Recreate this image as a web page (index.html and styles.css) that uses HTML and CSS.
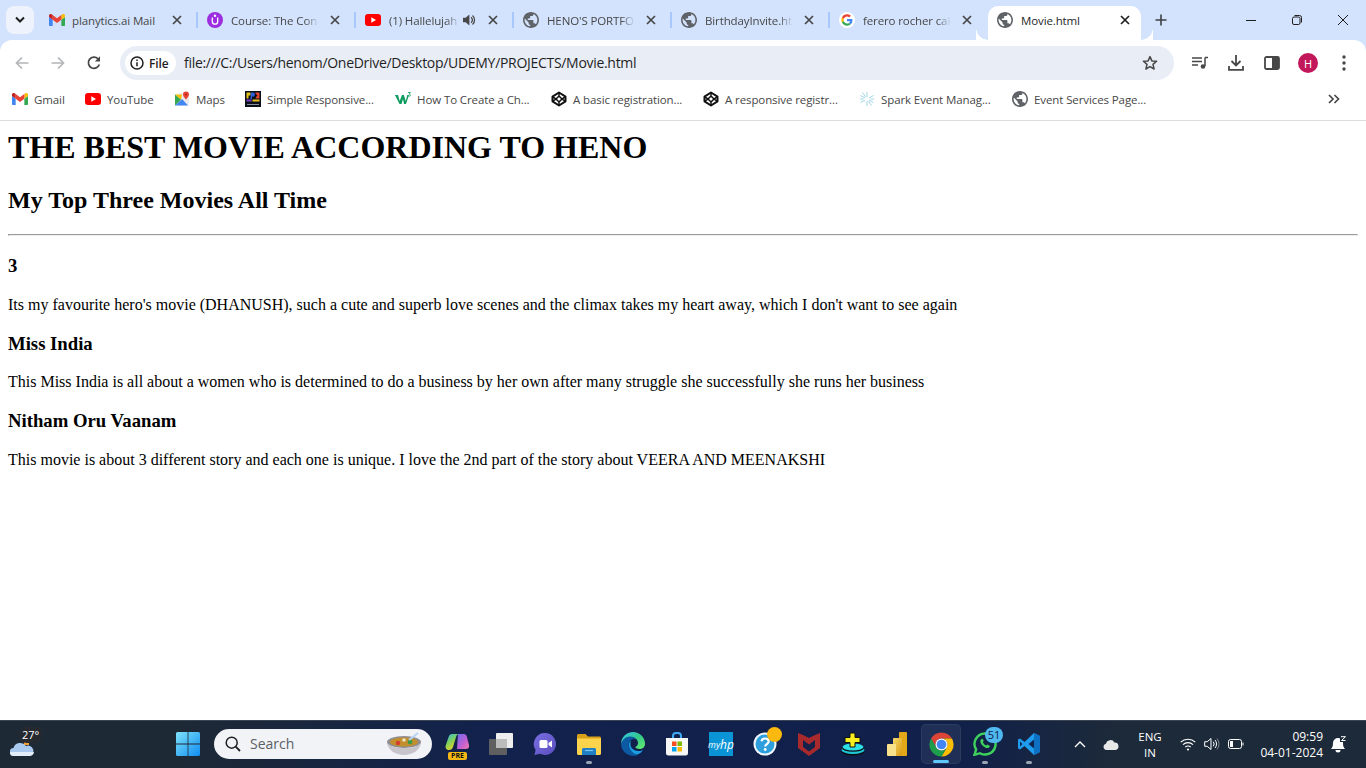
FILE: index.html
```html
<!DOCTYPE html>
<html lang="en">
<head>
<meta charset="utf-8">
<title>Movie.html</title>
<link rel="stylesheet" href="styles.css">
</head>
<body>
<svg class="defs" aria-hidden="true">
  <symbol id="gmail" viewBox="0 0 24 18">
    <path fill="#4285F4" d="M1.6 18h3.9V8.7L0 4.6v11.8C0 17.3.7 18 1.6 18z"/>
    <path fill="#34A853" d="M18.5 18h3.9c.9 0 1.6-.7 1.6-1.6V4.6l-5.5 4.1z"/>
    <path fill="#FBBC04" d="M18.5 1.6v7.1L24 4.6V2.4c0-2-2.3-3.1-3.9-1.9z"/>
    <path fill="#EA4335" d="M5.5 8.7V1.6L12 6.5l6.5-4.9v7.1L12 13.6z"/>
    <path fill="#C5221F" d="M0 2.4v2.2l5.5 4.1V1.6L3.9.5C2.3-.7 0 .4 0 2.4z"/>
  </symbol>
  <symbol id="yt" viewBox="0 0 16 12">
    <rect width="16" height="12" rx="3" fill="#f00"/>
    <path d="M6.3 3.3v5.4L11 6z" fill="#fff"/>
  </symbol>
  <symbol id="globe" viewBox="2 2 20 20">
    <path fill="#5f6368" d="M12 2C6.48 2 2 6.48 2 12s4.48 10 10 10 10-4.48 10-10S17.52 2 12 2zm-1 17.93c-3.95-.49-7-3.85-7-7.93 0-.62.08-1.21.21-1.79L9 15v1c0 1.100.9 2 2 2v1.930zm6.900-2.540c-.26-.81-1-1.390-1.900-1.390h-1v-3c0-.55-.45-1-1-1H8v-2h2c.55 0 1-.45 1-1V7h2c1.100 0 2-.9 2-2v-.41c2.930 1.190 5 4.060 5 7.410 0 2.080-.8 3.970-2.100 5.390z"/>
  </symbol>
  <symbol id="codepen" viewBox="0 0 16 16">
    <path fill="none" stroke="#111" stroke-width="2" stroke-linejoin="round" d="M8 1.500l6.500 4.200v4.600L8 14.500l-6.500-4.200V5.700z"/>
    <path fill="none" stroke="#111" stroke-width="1.500" d="M8 1.500v3.500M8 11v3.500M1.500 5.700L5 8l-3.500 2.300M14.500 5.700L11 8l3.500 2.300M5 8l3-3 3 3-3 3z"/>
  </symbol>
  <symbol id="close" viewBox="0 0 10 10">
    <path d="M1 1l8 8M9 1L1 9" fill="none" stroke="currentColor" stroke-width="1.700"/>
  </symbol>
  <symbol id="chrome" viewBox="0 0 48 48">
    <path fill="#DB4437" d="M6.680 14A20 20 0 0 1 41.320 14H24A10 10 0 0 0 15.340 29z"/>
    <path fill="#FBBC04" d="M41.320 14A20 20 0 0 1 24 44L32.660 29A10 10 0 0 0 24 14z"/>
    <path fill="#1E9E4A" d="M24 44A20 20 0 0 1 6.680 14L15.340 29A10 10 0 0 0 32.660 29z"/>
    <circle cx="24" cy="24" r="10" fill="#fff"/>
    <circle cx="24" cy="24" r="8" fill="#4285F4"/>
  </symbol>
</svg>

<div class="screen">
  <header class="browser">
    <div class="tabstrip">
      <button class="tab-search" aria-label="Search tabs">
        <svg width="12" height="8" viewBox="0 0 12 8"><path d="M2 1.500l4 4 4-4" fill="none" stroke="#1f1f1f" stroke-width="2"/></svg>
      </button>
      <div class="tab">
        <svg class="fav fav-gmail"><use href="#gmail"/></svg>
        <span class="tab-title tab-title-first">planytics.ai Mail</span>
        <svg class="tab-close"><use href="#close"/></svg>
      </div>
      <div class="tab">
        <svg class="fav" viewBox="0 0 16 16"><circle cx="8" cy="8" r="8" fill="#9d2ee0"/><circle cx="8" cy="3.800" r="1.200" fill="#fff"/><path d="M5.300 5.600v3.900a2.700 2.700 0 0 0 5.400 0V5.600" fill="none" stroke="#fff" stroke-width="1.300"/></svg>
        <span class="tab-title">Course: The Con</span>
        <svg class="tab-close"><use href="#close"/></svg>
      </div>
      <div class="tab">
        <svg class="fav"><use href="#yt"/></svg>
        <span class="tab-title tab-title-short">(1) Hallelujah</span>
        <svg class="tab-audio" viewBox="0 0 14 14"><path d="M1 4.800v4.400h2.600L7.400 12.500V1.500L3.600 4.800z" fill="#474747"/><path d="M9 4.200a3.500 3.500 0 0 1 0 5.600M10.500 2.500a6 6 0 0 1 0 9" fill="none" stroke="#474747" stroke-width="1.300"/></svg>
        <svg class="tab-close tab-close-audio"><use href="#close"/></svg>
      </div>
      <div class="tab">
        <svg class="fav"><use href="#globe"/></svg>
        <span class="tab-title">HENO'S PORTFO</span>
        <svg class="tab-close"><use href="#close"/></svg>
      </div>
      <div class="tab">
        <svg class="fav"><use href="#globe"/></svg>
        <span class="tab-title">BirthdayInvite.ht</span>
        <svg class="tab-close"><use href="#close"/></svg>
      </div>
      <div class="tab tab-last">
        <svg class="fav fav-g" viewBox="0 0 48 48"><circle cx="24" cy="24" r="24" fill="#fff"/><g transform="translate(7 7) scale(.71)"><path fill="#EA4335" d="M24 9.500c3.540 0 6.710 1.220 9.210 3.600l6.850-6.850C35.900 2.380 30.470 0 24 0 14.620 0 6.510 5.380 2.560 13.220l7.980 6.190C12.430 13.720 17.740 9.500 24 9.500z"/><path fill="#4285F4" d="M46.980 24.550c0-1.570-.15-3.090-.38-4.550H24v9.020h12.940c-.58 2.960-2.260 5.480-4.780 7.180l7.730 6c4.510-4.180 7.090-10.360 7.090-17.650z"/><path fill="#FBBC05" d="M10.530 28.590c-.48-1.450-.76-2.990-.76-4.590s.27-3.140.76-4.590l-7.980-6.190C.92 16.460 0 20.120 0 24c0 3.880.92 7.540 2.560 10.780l7.970-6.190z"/><path fill="#34A853" d="M24 48c6.480 0 11.930-2.130 15.890-5.810l-7.730-6c-2.150 1.450-4.920 2.300-8.160 2.300-6.260 0-11.570-4.220-13.470-9.910l-7.980 6.190C6.510 42.620 14.620 48 24 48z"/></g></svg>
        <span class="tab-title">ferero rocher cak</span>
        <svg class="tab-close"><use href="#close"/></svg>
      </div>
      <div class="tab tab-active">
        <svg class="fav"><use href="#globe"/></svg>
        <span class="tab-title">Movie.html</span>
        <svg class="tab-close"><use href="#close"/></svg>
      </div>
      <button class="new-tab" aria-label="New tab">
        <svg width="12" height="12" viewBox="0 0 12 12"><path d="M6 .5v11M.5 6h11" fill="none" stroke="#3c4043" stroke-width="1.600"/></svg>
      </button>
      <div class="window-controls">
        <span class="win-btn"><svg width="10" height="10" viewBox="0 0 10 10"><path d="M0 5.500h10" stroke="#1f1f1f" stroke-width="1"/></svg></span>
        <span class="win-btn"><svg width="10" height="10" viewBox="0 0 10 10"><rect x=".5" y="2" width="7.500" height="7.500" rx="1.500" fill="none" stroke="#1f1f1f"/><path d="M2.500.5h5a2 2 0 0 1 2 2v5" fill="none" stroke="#1f1f1f"/></svg></span>
        <span class="win-btn"><svg width="10" height="10" viewBox="0 0 10 10"><path d="M0 0l10 10M10 0L0 10" stroke="#1f1f1f" stroke-width="1"/></svg></span>
      </div>
    </div>

    <div class="toolbar">
      <span class="tool"><svg width="16" height="16" viewBox="0 0 16 16"><path d="M14.500 8H2.500M8 2.500L2.500 8 8 13.500" fill="none" stroke="#b3b5b8" stroke-width="1.700"/></svg></span>
      <span class="tool"><svg width="16" height="16" viewBox="0 0 16 16"><path d="M1.500 8h12M8 2.500L13.500 8 8 13.500" fill="none" stroke="#b3b5b8" stroke-width="1.700"/></svg></span>
      <span class="tool"><svg width="16" height="16" viewBox="0 0 16 16"><path d="M13.300 9.500A5.600 5.600 0 1 1 12 3.800" fill="none" stroke="#474747" stroke-width="1.700"/><path d="M14 1.300v5.200H8.800z" fill="#474747"/></svg></span>
      <div class="omnibox">
        <span class="chip">
          <svg width="14" height="14" viewBox="0 0 14 14"><circle cx="7" cy="7" r="6" fill="none" stroke="#1f1f1f" stroke-width="1.500"/><path d="M7 6.200v4M7 3.500v1.500" stroke="#1f1f1f" stroke-width="1.500"/></svg>
          <span class="chip-label">File</span>
        </span>
        <span class="url">file:///C:/Users/henom/OneDrive/Desktop/UDEMY/PROJECTS/Movie.html</span>
        <svg class="star" width="16" height="16" viewBox="0 0 16 16"><path d="M8 1.600l1.900 4.300 4.700.4-3.600 3.100 1.100 4.600L8 11.600 3.900 14 5 9.400 1.400 6.300l4.700-.4z" fill="none" stroke="#474747" stroke-width="1.500" stroke-linejoin="round"/></svg>
      </div>
      <div class="tool-group">
        <span class="tool"><svg width="16" height="14" viewBox="0 0 16 14"><path d="M0 2h10M0 5.500h10M0 9h6" stroke="#474747" stroke-width="1.500"/><path d="M13 1.500h3M13 1.500v8.500" stroke="#474747" stroke-width="1.500" fill="none"/><circle cx="11" cy="10.500" r="2.300" fill="#474747"/></svg></span>
        <span class="tool"><svg width="16" height="16" viewBox="0 0 16 16"><path d="M8 0v10M3.500 6L8 10.500 12.500 6M1 11v3.800h14V11" fill="none" stroke="#474747" stroke-width="1.800"/></svg></span>
        <span class="tool"><svg width="16" height="14" viewBox="0 0 16 14"><rect x="1" y="1" width="14" height="12" rx="1.500" fill="none" stroke="#474747" stroke-width="1.800"/><rect x="8" y="1" width="7" height="12" fill="#474747"/></svg></span>
        <span class="tool"><span class="avatar">H</span></span>
        <span class="tool"><svg width="4" height="16" viewBox="0 0 4 16"><circle cx="2" cy="2" r="1.700" fill="#474747"/><circle cx="2" cy="8" r="1.700" fill="#474747"/><circle cx="2" cy="14" r="1.700" fill="#474747"/></svg></span>
      </div>
    </div>

    <nav class="bookmarks">
      <span class="bm"><svg class="bm-icon bm-icon-gmail"><use href="#gmail"/></svg>Gmail</span>
      <span class="bm"><svg class="bm-icon bm-icon-yt"><use href="#yt"/></svg>YouTube</span>
      <span class="bm"><svg class="bm-icon" viewBox="0 0 16 16"><path d="M1 3.500l8-2 6 1v12l-14 0z" fill="#e8eaed"/><path d="M1 14.500L8 8l6 6.500z" fill="#4285f4"/><path d="M1 3.500V14.500L7 8.500z" fill="#34a853"/><path d="M7 8.500L1 3.500h7z" fill="#fbbc04"/><path d="M12 .5a3 3 0 0 0-3 3c0 2.200 3 5 3 5s3-2.800 3-5a3 3 0 0 0-3-3z" fill="#ea4335"/><circle cx="12" cy="3.500" r="1" fill="#a52714"/></svg>Maps</span>
      <span class="bm"><svg class="bm-icon" viewBox="0 0 16 16"><rect width="16" height="16" fill="#0b0f1c"/><path d="M1.500 1.500h4v3h-2v3h-2z" fill="#e8c21c"/><path d="M6 1.500h3l1 2-1 2H7V8H5.500z" fill="#2d5fd8"/><path d="M10.500 1.500h4v6h-4l1-2 1-1-2-2z" fill="#e2472e"/><path d="M1.500 8.500h5v2h-5z" fill="#7b3fc9"/><path d="M7.500 8.500h7v2h-7z" fill="#e8c21c"/><path d="M2 13h12v1H2z" fill="#8a8f9c"/></svg>Simple Responsive...</span>
      <span class="bm"><svg class="bm-icon" viewBox="0 0 16 16"><path d="M0 4h3l1.700 6L7 4h1.800l2 6L12.300 4H14l-3 9H9L8 8l-1.500 5h-2z" fill="#0d9b5f"/><path d="M13 1.500h2.500L14 3.200c1 0 1.500.5 1.500 1 0 .8-1 1.200-2.200.9" fill="none" stroke="#0d9b5f" stroke-width=".8"/></svg>How To Create a Ch...</span>
      <span class="bm"><svg class="bm-icon"><use href="#codepen"/></svg>A basic registration...</span>
      <span class="bm"><svg class="bm-icon"><use href="#codepen"/></svg>A responsive registr...</span>
      <span class="bm"><svg class="bm-icon" viewBox="0 0 16 16"><path d="M8 1v5M8 10v5M1.500 4.500L6 7M10 9l4.500 2.500M14.500 4.500L10 7M6 9l-4.500 2.500M3.500 1.500L6.500 6M12.500 14.500L9.500 10M1 8h3.500M11.500 8H15" stroke="#9fd6e4" stroke-width="1" fill="none"/></svg>Spark Event Manag...</span>
      <span class="bm"><svg class="bm-icon"><use href="#globe"/></svg>Event Services Page...</span>
      <svg class="bm-more" width="12" height="10" viewBox="0 0 12 10"><path d="M1 1l4 4-4 4M6.500 1l4 4-4 4" fill="none" stroke="#474747" stroke-width="1.700"/></svg>
    </nav>
  </header>

  <main class="page">
    <h1>THE BEST MOVIE ACCORDING TO HENO</h1>
    <h2>My Top Three Movies All Time</h2>
    <hr>
    <h3>3</h3>
    <p>Its my favourite hero's movie (DHANUSH), such a cute and superb love scenes and the climax takes my heart away, which I don't want to see again</p>
    <h3>Miss India</h3>
    <p>This Miss India is all about a women who is determined to do a business by her own after many struggle she successfully she runs her business</p>
    <h3>Nitham Oru Vaanam</h3>
    <p>This movie is about 3 different story and each one is unique. I love the 2nd part of the story about VEERA AND MEENAKSHI</p>
  </main>

  <footer class="taskbar">
    <div class="weather">
      <svg class="weather-cloud" width="24" height="15" viewBox="0 0 24 15"><rect x="14" y="0" width="5" height="4" fill="#f0a030"/><path d="M4 15a4 4 0 0 1-.5-8A7 7 0 0 1 16 5a5 5 0 0 1 4 10z" fill="#a9c9ee"/><path d="M4 15a4 4 0 0 1-4-4h24a4.500 4.500 0 0 1-4 4z" fill="#e2edf9"/></svg>
      <span class="temp">27°</span>
    </div>

    <span class="task task-start">
      <svg width="24" height="24" viewBox="0 0 24 24">
        <defs><linearGradient id="win" x1="0" y1="0" x2="1" y2="1"><stop offset="0" stop-color="#7fe3fb"/><stop offset="1" stop-color="#0f8cf0"/></linearGradient></defs>
        <path d="M0 1.500A1.500 1.500 0 0 1 1.500 0h10.100v11.600H0zM12.400 0h10.100A1.500 1.500 0 0 1 24 1.500v10.100H12.400zM0 12.400h11.600V24H1.500A1.500 1.500 0 0 1 0 22.500zM12.400 12.400H24v10.100a1.500 1.500 0 0 1-1.500 1.500H12.400z" fill="url(#win)"/>
      </svg>
    </span>

    <div class="search">
      <svg width="16" height="16" viewBox="0 0 16 16"><circle cx="6.700" cy="6.700" r="5.500" fill="none" stroke="#1f1f1f" stroke-width="1.500"/><path d="M10.700 10.700L15 15" stroke="#1f1f1f" stroke-width="1.800"/></svg>
      <span class="search-label">Search</span>
      <svg class="bowl" width="36" height="26" viewBox="0 0 36 26"><ellipse cx="18" cy="11" rx="17" ry="6" fill="#8f8d94"/><path d="M1 12c1 7 8 12 17 12s16-5 17-12c-4 4-10 5-17 5S5 16 1 12z" fill="#c7c5cb"/><ellipse cx="18" cy="11" rx="14" ry="4.500" fill="#c28f2c"/><circle cx="12" cy="12" r="2.200" fill="#d33d2f"/><circle cx="24" cy="11" r="2.400" fill="#3f9a46"/><circle cx="18" cy="9" r="1.800" fill="#efe3c2"/><path d="M23 9L32 2" stroke="#b8d4f2" stroke-width="2"/></svg>
    </div>

    <span class="task">
      <svg width="24" height="22" viewBox="0 0 24 22">
        <defs><linearGradient id="cop" x1="0" y1="0" x2="0.6" y2="1"><stop offset="0" stop-color="#2fb8ef"/><stop offset=".5" stop-color="#7fd15a"/><stop offset="1" stop-color="#f5d327"/></linearGradient><linearGradient id="cop2" x1="0" y1="0" x2="1" y2="1"><stop offset="0" stop-color="#6a6cf2"/><stop offset=".6" stop-color="#c85fd0"/><stop offset="1" stop-color="#f07aa8"/></linearGradient></defs>
        <path d="M13 1h6c1.500 0 2.300 1 2.800 2.500L24 12c.5 2-.8 4-3 4H12z" fill="url(#cop2)"/>
        <path d="M7 1h7c-1.500 0-2.300 1-2.800 2.500L8 14c-.6 2-2 3-4 3-2.500 0-4-2-3.300-4.500L3.800 3.500C4.300 2 5.500 1 7 1z" fill="url(#cop)"/>
      </svg>
      <span class="pre-badge">PRE</span>
    </span>
    <span class="task">
      <svg width="24" height="24" viewBox="0 0 24 24"><rect x="7" y="1" width="17" height="15" rx="1" fill="#eeeeee"/><rect x="0" y="7" width="18" height="16" rx="1" fill="#5f5f5f"/><rect x="7" y="7" width="11" height="9" fill="#bcbcbc"/></svg>
    </span>
    <span class="task">
      <svg width="24" height="24" viewBox="0 0 24 24"><defs><linearGradient id="meet" x1="0" y1="0" x2="1" y2="1"><stop offset="0" stop-color="#7a6fe0"/><stop offset="1" stop-color="#5b4fc0"/></linearGradient></defs><path d="M12 1a11 11 0 1 1-5 20.800L1.500 23 2.600 18A11 11 0 0 1 12 1z" fill="url(#meet)"/><rect x="6.500" y="8" width="8" height="8" rx="1.500" fill="#fff"/><path d="M15.500 11l3.500-2.500v7L15.500 13z" fill="#fff"/></svg>
    </span>
    <span class="task task-open">
      <svg width="24" height="24" viewBox="0 0 24 24"><path d="M0 3.500C0 2.700.7 2 1.500 2h7L11 4.500h11.500c.8 0 1.500.7 1.500 1.500v3H0z" fill="#d8a019"/><path d="M0 6.500h24v15c0 .8-.7 1.500-1.500 1.500h-21C.7 23 0 22.300 0 21.500z" fill="#fbd34d"/><path d="M5 17.500c0-.8.7-1.500 1.500-1.500h11c.8 0 1.500.7 1.500 1.500V23H5z" fill="#1e7fc4"/><path d="M8 18.500h8" stroke="#7cc4ee" stroke-width="1.200"/></svg>
    </span>
    <span class="task">
      <svg width="24" height="24" viewBox="0 0 24 24"><defs><linearGradient id="edge1" x1="0" y1="0" x2="1" y2="1"><stop offset="0" stop-color="#35c1f1"/><stop offset=".5" stop-color="#34c98a"/><stop offset="1" stop-color="#66eb6e"/></linearGradient></defs><path d="M12 0a12 12 0 0 1 12 12c0 3-2.500 5-5.500 5-2 0-4-.8-4.300-2 1.500-.5 2.800-2 2.800-4C17 7 13 4.500 9 5 5 5.500 1.500 9 0 12 0 5 5.500 0 12 0z" fill="url(#edge1)"/><path d="M0 12c1-4 5-7.500 9-7.500 3 0 5 1 6.300 3C14 6.500 12 6.500 10.500 7.500 8 9 7 12 8 15c1 3.500 4 6.500 8.500 7.900A12 12 0 0 1 0 12z" fill="#0c59a4"/><path d="M10 8.500c-2 1.500-2.700 4-1.700 7 .8 2.700 3.500 6 7.700 7.300a12 12 0 0 0 6.500-5.300c-1.500 1-3 1.500-5 1.500-3.500 0-6.500-1.800-7.500-4-.8-1.800-.8-4.500 0-6.500z" fill="#1b9de2"/></svg>
    </span>
    <span class="task">
      <svg width="24" height="24" viewBox="0 0 24 24"><path d="M8 6V4a3 3 0 0 1 3-3h2a3 3 0 0 1 3 3v2" fill="none" stroke="#3fa9f5" stroke-width="2"/><path d="M1 6h22v15a2.500 2.500 0 0 1-2.500 2.500h-17A2.500 2.500 0 0 1 1 21z" fill="#f7f7f7"/><rect x="7" y="9.500" width="4.500" height="4.500" fill="#f25022"/><rect x="12.500" y="9.500" width="4.500" height="4.500" fill="#7fba00"/><rect x="7" y="15" width="4.500" height="4.500" fill="#00a4ef"/><rect x="12.500" y="15" width="4.500" height="4.500" fill="#ffb900"/></svg>
    </span>
    <span class="task">
      <span class="myhp">my<b>hp</b></span>
    </span>
    <span class="task">
      <svg width="24" height="24" viewBox="0 0 24 24"><circle cx="12" cy="12" r="11.500" fill="#f1f7fb"/><circle cx="12" cy="12" r="9.500" fill="#2e9fdc"/><path d="M8.500 9.300A3.600 3.600 0 0 1 12 6.500c2.200 0 3.700 1.300 3.700 3 0 2.600-3.500 2.700-3.500 5" fill="none" stroke="#fff" stroke-width="2.200"/><circle cx="12.200" cy="17.500" r="1.400" fill="#fff"/></svg>
      <span class="help-dot"></span>
    </span>
    <span class="task">
      <svg width="22" height="24" viewBox="0 0 22 24"><path d="M0 1l5 2 6 3 6-3 5-2v15l-11 8L0 16z" fill="#a92a2c"/><path d="M5 8v7l6 4.500 6-4.500V8l-6 4.500z" fill="#14214b"/></svg>
    </span>
    <span class="task">
      <svg width="24" height="24" viewBox="0 0 24 24"><ellipse cx="12" cy="19.500" rx="11.500" ry="4" fill="#0b0f14"/><ellipse cx="12" cy="18" rx="11.500" ry="4" fill="#1fc7d6"/><ellipse cx="12" cy="16" rx="11" ry="3.800" fill="#0b0f14"/><ellipse cx="12" cy="15" rx="10.500" ry="3.500" fill="#2ce0e8"/><path d="M9 1h5v4.500h5v5h-5V15H9v-4.500H4v-5h5z" fill="#f7ee20" stroke="#111" stroke-width="1"/></svg>
    </span>
    <span class="task">
      <svg width="20" height="24" viewBox="0 0 20 24"><defs><linearGradient id="pbi" x1="0" y1="0" x2="1" y2="1"><stop offset="0" stop-color="#f6d96b"/><stop offset="1" stop-color="#d99a12"/></linearGradient></defs><rect x="12" y="0" width="8" height="24" rx="1" fill="#e2a818"/><rect x="6" y="6" width="9" height="18" rx="1" fill="url(#pbi)"/><rect x="0" y="12" width="9" height="12" rx="1" fill="#f8e38c"/></svg>
    </span>
    <span class="task task-active">
      <svg width="29" height="29"><use href="#chrome"/></svg>
    </span>
    <span class="task task-open">
      <svg width="24" height="24" viewBox="0 0 24 24"><path d="M12 1.500a10.500 10.500 0 1 1-5 19.700L1.500 22.800l1.600-5.300A10.500 10.500 0 0 1 12 1.500z" fill="none" stroke="#3ed15c" stroke-width="2.400"/><path d="M8 7.500c-1.500 1.500-.5 4 1.500 6 2 2 5 3.500 6.500 2l1-1.500-2.700-1.600-1 1c-1.500-.5-3-2-3.500-3.500l1-1L9.500 6.500z" fill="#3ed15c"/></svg>
      <span class="wa-badge">51</span>
    </span>
    <span class="task task-open">
      <svg width="24" height="24" viewBox="0 0 24 24"><path d="M17 1l6 3v16l-6 3L7.500 14 3 17.500 1 16.500v-9L3 6.500 7.500 10z" fill="#1f9cf0"/><path d="M17 1l6 3v16l-6 3z" fill="#0d70c2"/><path d="M3 9.500L5.500 12 3 14.500zM17 7.500L11.500 12l5.500 4.500z" fill="#10264f"/></svg>
    </span>

    <div class="tray">
      <svg class="tray-chevron" width="12" height="7" viewBox="0 0 12 7"><path d="M1 6l5-5 5 5" fill="none" stroke="#fff" stroke-width="1.400"/></svg>
      <svg class="tray-cloud" width="16" height="11" viewBox="0 0 16 11"><path d="M3.500 11a3.200 3.200 0 0 1-.5-6.300A4.500 4.500 0 0 1 11.400 3.500 3.800 3.800 0 0 1 12.500 11z" fill="#e8e8e8"/></svg>
      <span class="lang"><span>ENG</span><span>IN</span></span>
      <svg class="tray-wifi" width="16" height="13" viewBox="0 0 16 13"><path d="M.7 4.200a10.500 10.500 0 0 1 14.600 0M3 6.700a7 7 0 0 1 10 0M5.300 9.100a3.700 3.700 0 0 1 5.400 0" fill="none" stroke="#fff" stroke-width="1.100"/><circle cx="8" cy="11.500" r="1.100" fill="#fff"/></svg>
      <svg class="tray-vol" width="16" height="14" viewBox="0 0 16 14"><path d="M.7 4.700v4.600h2.500L7 12.500v-11L3.200 4.700z" fill="none" stroke="#fff" stroke-width="1"/><path d="M9.200 4.700a3.500 3.500 0 0 1 0 4.600M11 3a6 6 0 0 1 0 8" fill="none" stroke="#fff" stroke-width="1"/><path d="M13 1.500a8.500 8.500 0 0 1 0 11" fill="none" stroke="#7c8794" stroke-width="1"/></svg>
      <svg class="tray-batt" width="16" height="10" viewBox="0 0 16 10"><rect x=".5" y=".5" width="13" height="9" rx="2" fill="none" stroke="#fff"/><rect x="2" y="2" width="3" height="6" fill="#fff"/><path d="M14.500 3.500h1v3h-1z" fill="#fff"/></svg>
      <span class="clock"><span>09:59</span><span>04-01-2024</span></span>
      <svg class="tray-bell" width="16" height="17" viewBox="0 0 16 17"><path d="M1 13c1.500-1.500 2-3 2-6a5 5 0 0 1 5-5c.7 0 1.400.1 2 .5V6h3v1c0 3 .5 4.500 2 6z" fill="#fff"/><path d="M5.500 14h5a2.500 2.500 0 0 1-5 0z" fill="#fff"/><path d="M11 .7h4.500L11.500 4.500H15.500" fill="none" stroke="#fff" stroke-width="1"/></svg>
    </div>
  </footer>
</div>
</body>
</html>
```

FILE: styles.css
```css
* { box-sizing: border-box; }

html, body { margin: 0; height: 100%; }

body { overflow: hidden; background: #fff; }

.defs { display: block; width: 0; height: 0; }

.screen {
  height: 768px;
  display: flex;
  flex-direction: column;
}

/* Browser chrome */
.browser {
  font-family: "Open Sans", "Noto Sans", sans-serif;
  background: #d3e3fd;
  flex: none;
}

.tabstrip {
  height: 40px;
  display: flex;
  align-items: flex-start;
  padding-left: 6px;
  padding-top: 6px;
}

.tab-search {
  width: 28px;
  height: 28px;
  margin-right: 4px;
  border: 0;
  border-radius: 8px;
  background: #edf2fc;
  display: flex;
  align-items: center;
  justify-content: center;
  padding: 0;
}

.tab {
  position: relative;
  width: 158px;
  height: 34px;
  padding: 0 0 6px 11px;
  display: flex;
  align-items: center;
  color: #474747;
  font-size: 11.5px;
  letter-spacing: -0.12px;
}

.tab::after {
  content: "";
  position: absolute;
  right: -2px;
  top: 6px;
  width: 2px;
  height: 16px;
  background: #a8c7fa;
}

.tab-last::after { display: none; }

.fav {
  width: 16px;
  height: 16px;
  flex: none;
}

.fav-gmail { height: 12px; }

.tab-title {
  width: 88px;
  margin-left: 8px;
  white-space: nowrap;
  overflow: hidden;
  flex: none;
  -webkit-mask-image: linear-gradient(to right, #000 calc(100% - 14px), transparent);
  mask-image: linear-gradient(to right, #000 calc(100% - 14px), transparent);
}

.tab-title-first {
  width: 89px;
  margin-left: 7px;
  -webkit-mask-image: none;
  mask-image: none;
}

.tab-title-short { width: 71px; }

.tab-active .tab-title {
  -webkit-mask-image: none;
  mask-image: none;
}

.tab-audio {
  width: 14px;
  height: 14px;
  margin-left: 2px;
  flex: none;
}

.tab-close {
  width: 10px;
  height: 10px;
  margin-left: 11px;
  color: #474747;
  flex: none;
}

.tab-close-audio { margin-left: 12px; }

.tab-active {
  width: 153px;
  margin-left: 2px;
  padding-left: 9px;
  background: #fff;
  border-radius: 10px 10px 0 0;
  color: #1f1f1f;
}

.tab-active .tab-close { color: #1f1f1f; }

.tab-active::before,
.tab-active::after {
  content: "";
  position: absolute;
  bottom: 0;
  top: auto;
  width: 12px;
  height: 12px;
  background: radial-gradient(circle at 100% 0, transparent 11.5px, #fff 12px);
}

.tab-active::before { left: -12px; }

.tab-active::after {
  right: -12px;
  background: radial-gradient(circle at 0 0, transparent 11.5px, #fff 12px);
}

.new-tab {
  width: 28px;
  height: 28px;
  margin-left: 6px;
  margin-top: 0;
  border: 0;
  padding: 0;
  background: none;
  display: flex;
  align-items: center;
  justify-content: center;
}

.window-controls {
  margin-left: auto;
  margin-top: -6px;
  display: flex;
}

.win-btn {
  width: 46px;
  height: 40px;
  display: flex;
  align-items: center;
  justify-content: center;
}

.toolbar {
  height: 46px;
  background: #fff;
  border-radius: 12px 12px 0 0;
  padding: 6px 4px;
  display: flex;
  align-items: center;
}

.tool {
  width: 36px;
  height: 34px;
  display: flex;
  align-items: center;
  justify-content: center;
  flex: none;
}

.omnibox {
  flex: 1;
  height: 34px;
  margin-left: 8px;
  margin-right: 8px;
  background: #e9edf6;
  border-radius: 17px;
  padding: 0 16px 0 5px;
  display: flex;
  align-items: center;
}

.chip {
  width: 51px;
  height: 24px;
  background: #fff;
  border-radius: 12px;
  padding-left: 5px;
  display: flex;
  align-items: center;
  flex: none;
}

.chip-label {
  margin-left: 5px;
  font-size: 12px;
  font-weight: 600;
  letter-spacing: -0.1px;
  color: #1f1f1f;
}

.url {
  margin-left: 8px;
  padding-bottom: 2px;
  font-size: 14px;
  color: #1f1f1f;
  white-space: nowrap;
  letter-spacing: -0.3px;
}

.star { margin-left: auto; }

.tool-group { display: flex; }

.avatar {
  width: 20px;
  height: 20px;
  border-radius: 50%;
  background: #c2185b;
  color: #fff;
  font-size: 11px;
  display: flex;
  align-items: center;
  justify-content: center;
}

.bookmarks {
  height: 35px;
  background: #fff;
  border-bottom: 1px solid #dadce0;
  padding: 0 0 8px 12px;
  display: grid;
  grid-template-columns: 73px 89px 71px 150px 156px 152px 156px 153px 1fr 38px;
  align-items: center;
  font-size: 11.5px;
  letter-spacing: -0.1px;
  color: #474747;
}

.bm {
  display: flex;
  align-items: center;
  white-space: nowrap;
}

.bm-icon {
  width: 16px;
  height: 16px;
  margin-right: 6px;
  flex: none;
}

.bm-icon-gmail { height: 12px; }

.bm-icon-yt { height: 12px; }

.bm-more { justify-self: start; }

/* Page */
.page {
  flex: 1;
  min-height: 0;
  overflow: hidden;
  padding: 8px;
  background: #fff;
  color: #000;
  font-family: "Liberation Serif", "Times New Roman", serif;
}

.page h1 { margin-top: 0; }

/* Taskbar */
.taskbar {
  height: 48px;
  flex: none;
  display: flex;
  align-items: center;
  padding-bottom: 1px;
  border-top: 1px solid #3a4452;
  background: linear-gradient(to right, #1d2935 0, #1d2935 13%, #12224c 35%, #10204a 70%, #1d2a39 82%, #1d2a39 100%);
  color: #fff;
  font-family: "Open Sans", "Noto Sans", sans-serif;
}

.weather {
  position: relative;
  width: 166px;
  height: 46px;
  flex: none;
}

.weather-cloud {
  position: absolute;
  left: 10px;
  top: 20px;
}

.temp {
  position: absolute;
  left: 19px;
  top: 6px;
  padding: 0 3px;
  background: #262a30;
  border-radius: 8px;
  font-size: 11px;
  line-height: 16px;
}

.task {
  position: relative;
  width: 44px;
  height: 40px;
  flex: none;
  display: flex;
  align-items: center;
  justify-content: center;
}

.task-open::after,
.task-active::after {
  content: "";
  position: absolute;
  bottom: 0;
  left: 50%;
  width: 6px;
  height: 3px;
  margin-left: -3px;
  border-radius: 2px;
  background: #9aa4b2;
}

.task-active {
  width: 40px;
  margin: 0 2px;
  background: rgba(255, 255, 255, 0.07);
  border-radius: 5px;
  border: 1px solid rgba(255, 255, 255, 0.05);
}

.task-active::after {
  width: 16px;
  margin-left: -8px;
  background: #5cc8fb;
}

.search {
  width: 218px;
  height: 30px;
  margin: 0 3px 0 4px;
  padding: 0 10px 0 11px;
  border-radius: 15px;
  background: #f1f3f6;
  color: #5a5f66;
  font-size: 14px;
  display: flex;
  align-items: center;
  flex: none;
}

.search-label {
  margin-left: 9px;
  padding-bottom: 2px;
}

.bowl { margin-left: auto; }

.pre-badge {
  position: absolute;
  left: 13px;
  bottom: 4px;
  width: 19px;
  height: 8px;
  border-radius: 2px;
  background: #f5b914;
  color: #111;
  font-size: 7px;
  font-weight: 700;
  line-height: 8px;
  text-align: center;
}

.myhp {
  width: 24px;
  height: 24px;
  background: #0a94d6;
  color: #fff;
  font-size: 9px;
  font-style: italic;
  display: flex;
  align-items: center;
  justify-content: center;
}

.myhp b { font-size: 12px; font-weight: 400; }

.help-dot {
  position: absolute;
  left: 24px;
  top: 3px;
  width: 15px;
  height: 15px;
  border-radius: 50%;
  background: #fbb80f;
}

.wa-badge {
  position: absolute;
  left: 22px;
  top: 3px;
  width: 18px;
  height: 16px;
  border-radius: 8px;
  background: #4fb9ef;
  color: #10204a;
  font-size: 11px;
  line-height: 16px;
  text-align: center;
}

.tray {
  flex: 1;
  display: flex;
  align-items: center;
  height: 46px;
  padding-left: 23px;
}

.tray-cloud { margin-left: 17px; }

.lang {
  width: 44px;
  margin-left: 9px;
  padding-top: 2px;
  font-size: 11.5px;
  line-height: 16px;
  display: flex;
  flex-direction: column;
  align-items: center;
}

.tray-wifi { margin-left: 8px; }

.tray-vol { margin-left: 8px; }

.tray-batt { margin-left: 8px; }

.clock {
  width: 79px;
  padding-top: 2px;
  font-size: 12px;
  line-height: 16px;
  display: flex;
  flex-direction: column;
  align-items: flex-end;
}

.tray-bell { margin-left: 7px; }
```
